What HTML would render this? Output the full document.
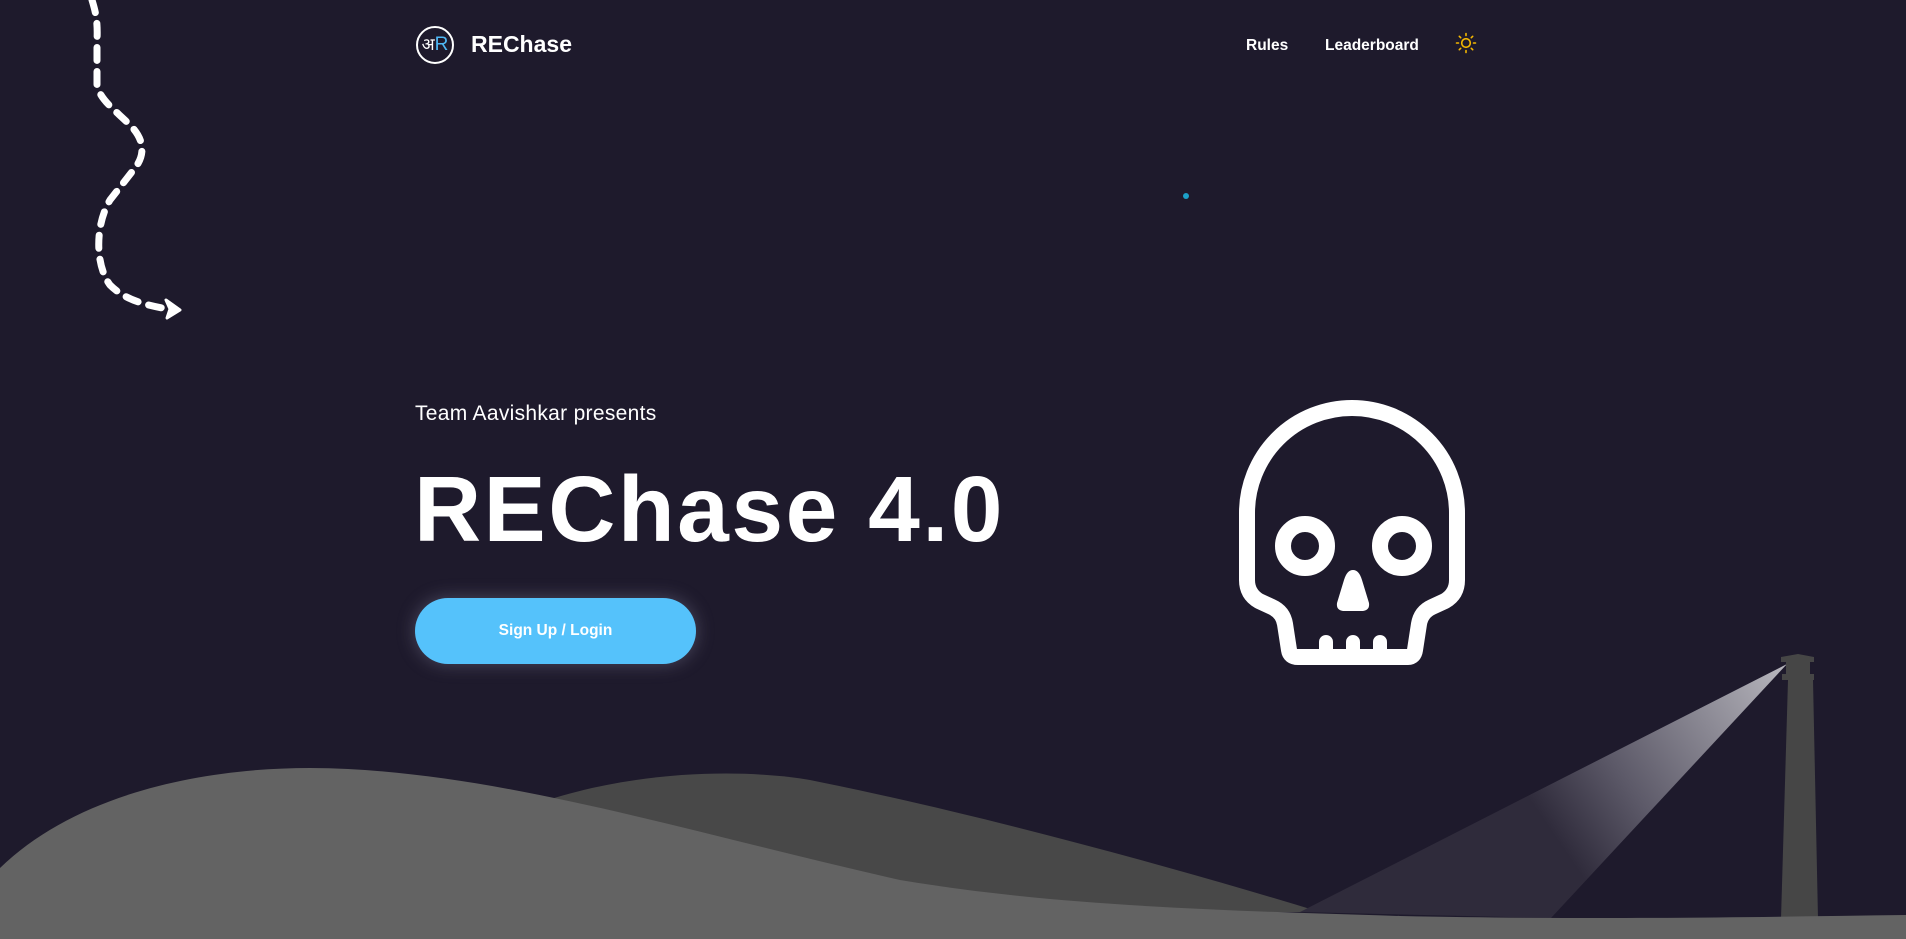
<!DOCTYPE html>
<html><head><meta charset="utf-8"><style>
*{margin:0;padding:0;box-sizing:border-box}
html,body{width:1906px;height:939px;overflow:hidden;background:#1e1a2c;font-family:"Liberation Sans",sans-serif;color:#fff}
.abs{position:absolute}
</style></head><body>
<svg class="abs" style="left:0;top:0" width="1906" height="939" viewBox="0 0 1906 939">
<defs>
<linearGradient id="beam" x1="1787" y1="664" x2="1420" y2="915" gradientUnits="userSpaceOnUse">
<stop offset="0" stop-color="#b9b8bf"/>
<stop offset="0.45" stop-color="#5c5968"/>
<stop offset="0.65" stop-color="#2f2b3b"/>
<stop offset="1" stop-color="#2f2b3b"/>
</linearGradient>
</defs>
<path d="M92,0 C95,10 98,20 97,40 L97,85 C100,100 115,110 130,125 C145,140 145,155 135,168 L110,200 C95,225 95,265 110,285 C125,300 145,305 168,309" fill="none" stroke="#fff" stroke-width="7" stroke-dasharray="13 11" stroke-linecap="round"/>
<path d="M166,300 L180,310 L167,318 L170,309 Z" fill="#fff" stroke="#fff" stroke-width="3" stroke-linejoin="round"/>
<circle cx="1186" cy="196" r="3" fill="#1ca0c8"/>
<g fill="none" stroke="#fff" stroke-width="16" stroke-linejoin="round" stroke-linecap="round">
<path d="M1298,657 L1408,657 Q1414,657 1415,650 L1419,624 Q1421,612 1432,607 L1445,601 Q1457,594 1457,580 L1457,513 A105,105 0 0 0 1247,513 L1247,580 Q1247,594 1259,601 L1272,607 Q1283,612 1285,624 L1289,650 Q1290,657 1298,657 Z"/>
<circle cx="1305" cy="546" r="22"/>
<circle cx="1402" cy="546" r="22"/>
<path d="M1326,650 L1326,642 M1353,650 L1353,642 M1380,650 L1380,642" stroke-width="14"/>
</g>
<path d="M1353,570 Q1347,570 1344,580 L1337,603 Q1336,610 1343,611 L1363,611 Q1370,610 1369,603 L1362,580 Q1359,570 1353,570 Z" fill="#fff"/>
<path d="M520,810 C620,770 740,768 810,780 C960,810 1150,860 1320,912 L520,912 Z" fill="#484848"/>
<path d="M1300,912 L1787,664 L1551,918 Z" fill="url(#beam)"/>
<path d="M1788,680 L1813,680 L1818,919 L1781,919 Z" fill="#464646"/>
<path d="M1781,657 L1798,654 L1814,657 L1814,662 L1810,662 L1810,674 L1814,674 L1814,680 L1782,680 L1782,674 L1786,674 L1786,662 L1781,662 Z" fill="#464646"/>
<path d="M0,868 C80,790 220,762 348,769 C520,778 700,835 900,880 C1050,905 1200,910 1400,916 C1600,920 1750,917 1906,915 L1906,939 L0,939 Z" fill="#636363"/>
</svg>

<div class="abs" style="left:416px;top:26px;width:38px;height:38px;border:2px solid #fff;border-radius:50%;text-align:center;line-height:34px;font-size:19px"><span style="font-family:'DejaVu Sans',sans-serif;font-size:17px">अ</span><span style="color:#4fb8f5">R</span></div>
<div class="abs" style="left:471px;top:31px;font-size:23px;font-weight:bold">REChase</div>
<div class="abs" style="left:1246px;top:37px;font-size:15.5px;font-weight:bold">Rules</div>
<div class="abs" style="left:1325px;top:37px;font-size:15.5px;font-weight:bold">Leaderboard</div>
<svg class="abs" style="left:1455px;top:32px" width="22" height="22" viewBox="0 0 22 22" fill="none" stroke="#f5b800" stroke-width="1.6" stroke-linecap="round"><circle cx="11" cy="11" r="4.3"/><path d="M11,1.5v2M11,18.5v2M1.5,11h2M18.5,11h2M4.3,4.3l1.4,1.4M16.3,16.3l1.4,1.4M4.3,17.7l1.4-1.4M16.3,5.7l1.4-1.4"/></svg>

<div class="abs" style="left:415px;top:402px;font-size:21px;letter-spacing:0.3px">Team Aavishkar presents</div>
<div class="abs" style="left:414px;top:456px;font-size:93px;font-weight:bold;letter-spacing:2.5px;white-space:nowrap">REChase 4.0</div>
<div class="abs" style="left:415px;top:598px;width:281px;height:66px;border-radius:33px;background:#55c2fb;box-shadow:0 0 18px rgba(160,160,190,0.35);text-align:center;line-height:66px;font-size:15.5px;font-weight:bold">Sign Up / Login</div>
</body></html>
